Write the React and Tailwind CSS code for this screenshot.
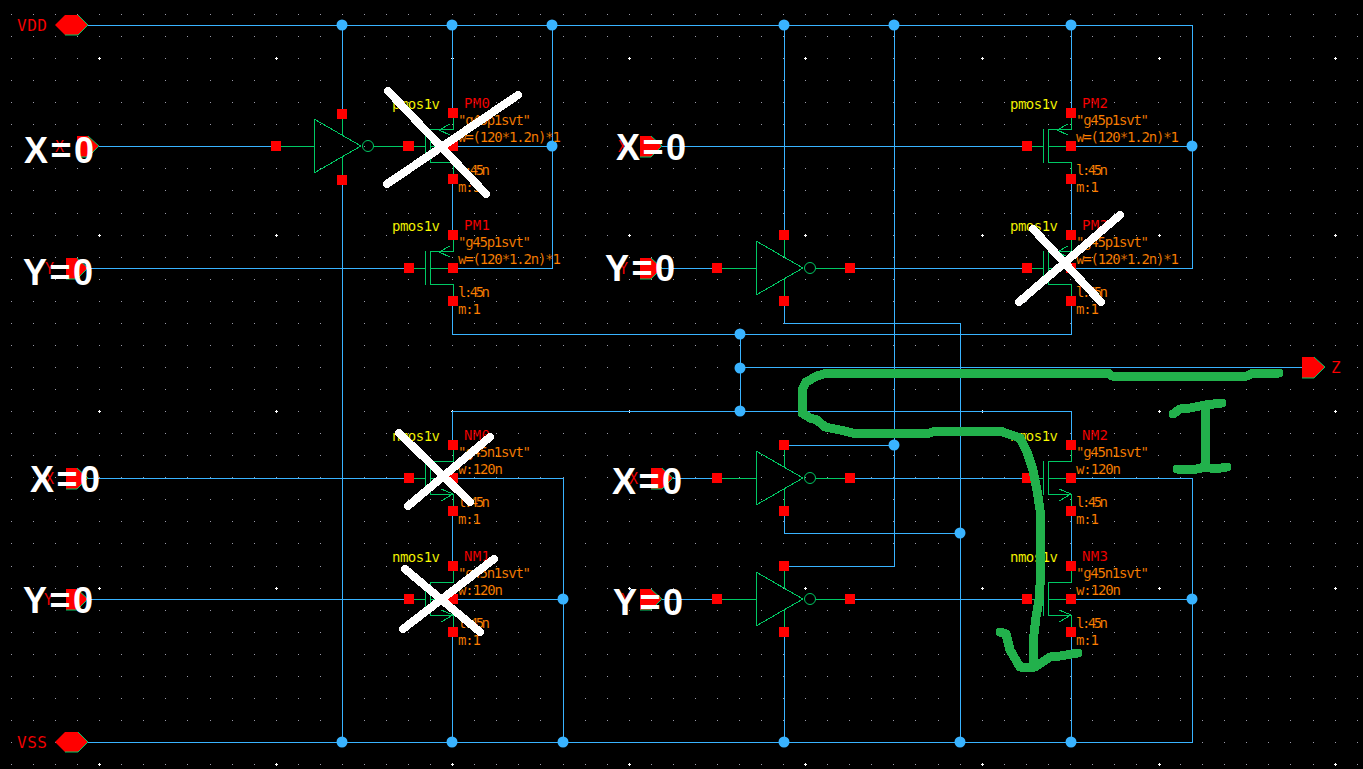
const WIRE = "#39b3ff";
const SYM = "#00c864";

// blue nets, as polylines
const wires = [
  "88,25 1192,25 1192,268 1071,268",
  "1071,146 1192,146",
  "342,25 342,114",
  "342,180 342,742",
  "452,25 452,114",
  "452,180 452,235",
  "452,301 452,334 1071,334 1071,301",
  "1071,25 1071,114",
  "1071,180 1071,235",
  "552,25 552,268 453,268",
  "453,146 552,146",
  "740,334 740,411",
  "740,367 1302,367",
  "1071,445 1071,411 452,411 452,445",
  "452,511 452,566",
  "1071,511 1071,566",
  "452,632 452,742",
  "1071,632 1071,742",
  "55,742 1192,742 1192,478 1071,478",
  "1071,599 1192,599",
  "453,478 563,478 563,742",
  "453,599 563,599",
  "784,25 784,235",
  "784,301 784,323 960,323 960,742",
  "894,25 894,566 784,566",
  "784,445 894,445",
  "784,511 784,533 960,533",
  "784,632 784,742",
  "99,146 276,146",
  "88,268 408,268",
  "88,478 408,478",
  "88,599 408,599",
  "662,146 1027,146",
  "662,268 717,268",
  "850,268 1027,268",
  "673,478 717,478",
  "850,478 1027,478",
  "662,599 717,599",
  "850,599 1027,599",
];

const dots = [
  [342, 25], [452, 25], [552, 25], [784, 25], [894, 25], [1071, 25],
  [552, 146], [1192, 146], [740, 334], [740, 368], [740, 411],
  [894, 445], [960, 533], [563, 599], [1192, 599],
  [342, 742], [452, 742], [563, 742], [784, 742], [960, 742], [1071, 742],
];

const mosfets = [
  { x: 453, y: 146, type: "pmos1v", name: "PM0", model: '"g45p1svt"', w: "w=(120*1.2n)*1" },
  { x: 453, y: 268, type: "pmos1v", name: "PM1", model: '"g45p1svt"', w: "w=(120*1.2n)*1" },
  { x: 1071, y: 146, type: "pmos1v", name: "PM2", model: '"g45p1svt"', w: "w=(120*1.2n)*1" },
  { x: 1071, y: 268, type: "pmos1v", name: "PM3", model: '"g45p1svt"', w: "w=(120*1.2n)*1" },
  { x: 453, y: 478, type: "nmos1v", name: "NM0", model: '"g45n1svt"', w: "w:120n" },
  { x: 453, y: 599, type: "nmos1v", name: "NM1", model: '"g45n1svt"', w: "w:120n" },
  { x: 1071, y: 478, type: "nmos1v", name: "NM2", model: '"g45n1svt"', w: "w:120n" },
  { x: 1071, y: 599, type: "nmos1v", name: "NM3", model: '"g45n1svt"', w: "w:120n" },
];

const inverters = [
  { x: 314, y: 146, top: 114, bot: 180, in: 276, out: 408 },
  { x: 756, y: 268, top: 235, bot: 301, in: 717, out: 850 },
  { x: 756, y: 478, top: 445, bot: 511, in: 717, out: 850 },
  { x: 756, y: 599, top: 566, bot: 632, in: 717, out: 850 },
];

const inputPins = [
  { x: 77, y: 146, label: "X", lx: 55 },
  { x: 66, y: 268, label: "Y", lx: 45 },
  { x: 66, y: 478, label: "X", lx: 45 },
  { x: 66, y: 599, label: "Y", lx: 44 },
  { x: 640, y: 146, label: "X", lx: 618 },
  { x: 640, y: 268, label: "Y", lx: 619 },
  { x: 651, y: 478, label: "X", lx: 629 },
  { x: 640, y: 599, label: "Y", lx: 621 },
];

const overlayLabels = [
  { x: 24, y: 163, t: "X=0" },
  { x: 23, y: 285, t: "Y=0" },
  { x: 30, y: 492, t: "X=0" },
  { x: 23, y: 613, t: "Y=0" },
  { x: 616, y: 160, t: "X=0" },
  { x: 605, y: 281, t: "Y=0" },
  { x: 612, y: 494, t: "X=0" },
  { x: 613, y: 615, t: "Y=0" },
];

const crosses = [
  [388, 91, 486, 194], [387, 184, 518, 95],
  [1033, 229, 1101, 302], [1019, 302, 1120, 215],
  [399, 433, 470, 502], [408, 506, 490, 437],
  [405, 569, 480, 632], [403, 629, 494, 559],
];

// hand-drawn current path and the "I"
const scribbles = [
  "1279,373 1253,373 1247,376 1112,376 1108,373 827,373 817,376 806,382 802,390 802,413 810,418 817,420 825,427 845,431 852,433 930,433 935,431 1000,431 1020,438 1027,452 1033,470 1037,490 1040,510 1040,585 1039,600 1036,617 1033,643 1033,662",
  "1000,632 1006,634 1010,650 1020,667 1035,667 1050,657 1060,656 1078,653",
  "1173,414 1180,409 1190,408 1205,405 1222,403",
  "1205,406 1205,466",
  "1177,469 1197,469 1205,467 1215,469 1227,467",
];

const gridX = Array.from({ length: 62 }, (_, i) => Math.round(11 + i * 22.06));
const gridY = Array.from({ length: 35 }, (_, i) => Math.round(14 + i * 22.06));
const majorX = [99, 276, 452, 629, 805, 982, 1159, 1335];
const majorY = [58, 235, 411, 588, 764];

// the black outline thins the glyphs down towards the schematic's 1px stroke font
const thin = "stroke-black stroke-[0.12px]";

const Sq = ({ x, y }) => <rect x={x - 5} y={y - 5} width="10" height="10" className="fill-[#ff0000]" />;

const Mosfet = ({ x, y, type, name, model, w }) => {
  const isP = type === "pmos1v";
  const gate = x - 44;
  const ch = x - 23;
  const bar = x - 28;
  return (
    <g>
      <g className="fill-none stroke-[#00c864]" shapeRendering="crispEdges">
        <polyline points={`${gate},${y} ${bar},${y}`} />
        <line x1={bar} y1={y - 17} x2={bar} y2={y + 17} />
        <polyline points={`${x},${y - 33} ${x},${y - 17} ${ch},${y - 17} ${ch},${y + 16} ${x},${y + 16} ${x},${y + 33}`} />
        <line x1={ch} y1={y} x2={x} y2={y} />
        {isP ? (
          <polyline points={`${x - 3},${y - 22} ${x - 14},${y - 16} ${x - 3},${y - 11}`} />
        ) : (
          <polyline points={`${x - 12},${y + 11} ${x},${y + 16} ${x - 12},${y + 23}`} />
        )}
      </g>
      <Sq x={x} y={y - 33} />
      <Sq x={x} y={y} />
      <Sq x={x} y={y + 33} />
      <Sq x={gate} y={y} />
      <text x={x - 61} y={y - 37} textLength="48" className={`fill-[#ffff00] text-[14px] ${thin}`}>{type}</text>
      <text x={x + 11} y={y - 38} textLength="26" className={`fill-[#ff0000] text-[14px] ${thin}`}>{name}</text>
      <text x={x + 5} y={y - 21} textLength="73" className={`fill-[#ff8000] text-[14px] ${thin}`}>{model}</text>
      <text x={x + 5} y={y - 4} textLength={isP ? 103 : 45} className={`fill-[#ff8000] text-[14px] ${thin}`}>{w}</text>
      <text x={x + 5} y={y + 29} textLength="32" className={`fill-[#ff8000] text-[14px] ${thin}`}>l:45n</text>
      <text x={x + 5} y={y + 46} textLength="23" className={`fill-[#ff8000] text-[14px] ${thin}`}>m:1</text>
    </g>
  );
};

const Inverter = ({ x, y, top, bot, in: inX, out }) => (
  <g>
    <g className="fill-none stroke-[#00c864]" shapeRendering="crispEdges">
      <polygon points={`${x},${y - 27} ${x + 47},${y} ${x},${y + 27}`} />
      <line x1={inX} y1={y} x2={x} y2={y} />
      <line x1={x + 60} y1={y} x2={out} y2={y} />
      <line x1={x + 28} y1={top} x2={x + 28} y2={y - 11} />
      <line x1={x + 28} y1={y + 11} x2={x + 28} y2={bot} />
    </g>
    <circle cx={x + 54} cy={y} r="5.5" className="fill-none stroke-[#00c864]" />
    <Sq x={inX} y={y} />
    <Sq x={x + 28} y={top} />
    <Sq x={x + 28} y={bot} />
    <Sq x={out} y={y} />
  </g>
);

const Hex = ({ y }) => (
  <g>
    <polygon points={`55,${y} 65,${y - 10} 78,${y - 10} 88,${y} 78,${y + 10} 65,${y + 10}`} className="fill-[#ff0000]" />
    <polyline points={`78,${y - 10} 88,${y} 78,${y + 10} 65,${y + 10}`} className="fill-none stroke-[#00c864]" />
  </g>
);

const InputPin = ({ x, y, label, lx }) => (
  <g>
    <polygon points={`${x},${y - 10} ${x + 11},${y - 10} ${x + 22},${y} ${x + 11},${y + 11} ${x},${y + 11}`} className="fill-[#ff0000]" />
    <polyline points={`${x + 11},${y - 10} ${x + 22},${y} ${x + 11},${y + 11} ${x},${y + 11}`} className="fill-none stroke-[#00c864]" />
    <text x={lx} y={y + 6} className={`fill-[#ff0000] text-[15px] ${thin}`}>{label}</text>
  </g>
);

export default function App() {
  return (
    <div className="h-[769px] w-[1363px] overflow-hidden bg-black">
      <svg width="1363" height="769" viewBox="0 0 1363 769" className="block font-['DejaVu_Sans_Mono',monospace]">
        <g className="fill-[#9a9aa8]">
          {gridX.map((x) => gridY.map((y) => <rect key={`${x}-${y}`} x={x} y={y} width="1" height="1" />))}
        </g>
        <g className="fill-white">
          {majorX.map((x) =>
            majorY.map((y) => (
              <path key={`${x}-${y}`} d={`M${x - 1} ${y}h3v1h-3z M${x} ${y - 1}h1v3h-1z`} />
            )),
          )}
        </g>

        <g fill="none" stroke={WIRE} shapeRendering="crispEdges">
          {wires.map((p) => <polyline key={p} points={p} />)}
        </g>
        <g fill={WIRE}>
          {dots.map(([x, y]) => <circle key={`${x}-${y}`} cx={x} cy={y} r="5.5" />)}
        </g>

        {inverters.map((inv) => <Inverter key={`${inv.x}-${inv.y}`} {...inv} />)}
        {mosfets.map((m) => <Mosfet key={m.name} {...m} />)}

        <Hex y={25} />
        <Hex y={742} />
        <text x={17} y={31} textLength="30" className={`fill-[#ff0000] text-[16px] ${thin}`}>VDD</text>
        <text x={17} y={748} textLength="30" className={`fill-[#ff0000] text-[16px] ${thin}`}>VSS</text>

        {inputPins.map((p) => <InputPin key={`${p.x}-${p.y}`} {...p} />)}

        <polygon points="1302,357 1314,357 1325,367 1314,378 1302,378" className="fill-[#ff0000]" />
        <polyline points="1314,357 1325,367 1314,378 1302,378" stroke={SYM} fill="none" />
        <text x={1331} y={373} className={`fill-[#ff0000] text-[16px] ${thin}`}>Z</text>

        <g className="fill-none stroke-[#22b14c] stroke-[9px]" strokeLinecap="round" strokeLinejoin="round" shapeRendering="crispEdges">
          {scribbles.map((p) => <polyline key={p} points={p} />)}
        </g>

        <g className="stroke-white stroke-[8px]" strokeLinecap="round" shapeRendering="crispEdges">
          {crosses.map(([x1, y1, x2, y2]) => <line key={`${x1}-${y1}`} x1={x1} y1={y1} x2={x2} y2={y2} />)}
        </g>

        {overlayLabels.map((l) => (
          <text key={`${l.x}-${l.y}`} x={l.x} y={l.y} textLength="70" className="fill-white font-['Liberation_Sans',sans-serif] text-[36px] font-bold">
            {l.t}
          </text>
        ))}
      </svg>
    </div>
  );
}
